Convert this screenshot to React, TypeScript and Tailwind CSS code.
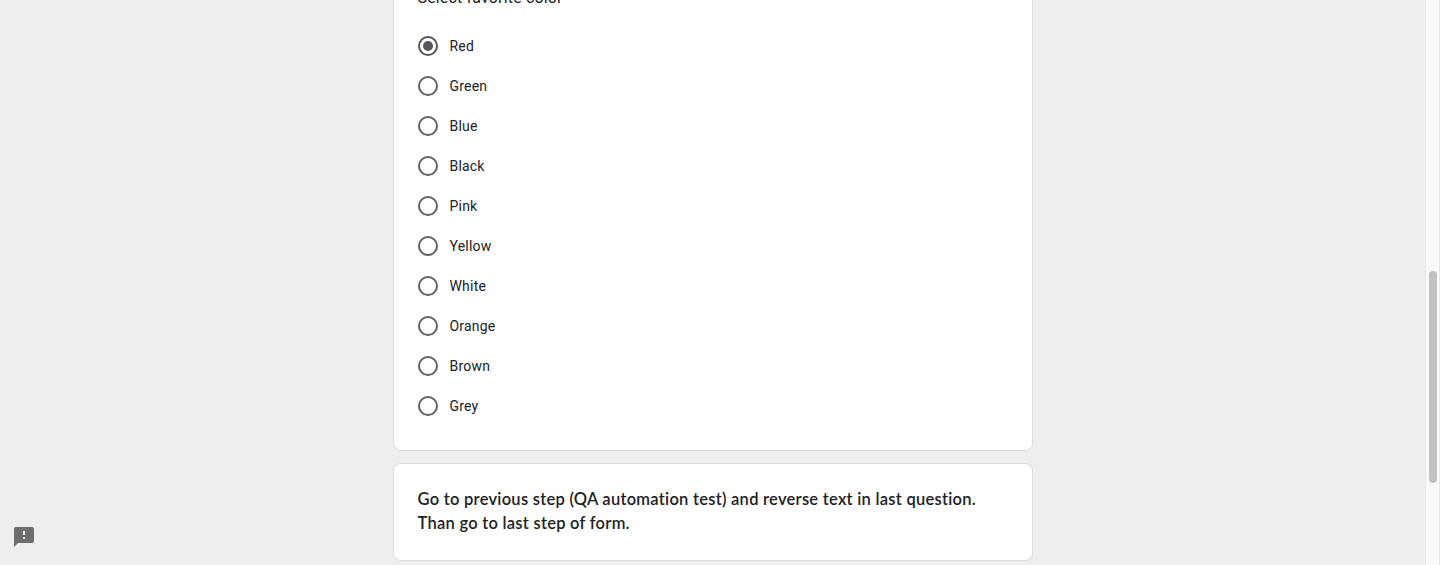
const colors = ["Red", "Green", "Blue", "Black", "Pink", "Yellow", "White", "Orange", "Brown", "Grey"];

function Radio({ checked }: { checked: boolean }) {
  return (
    <span
      className={
        checked
          ? "flex size-5 items-center justify-center rounded-full border-2 border-[#55565b]"
          : "flex size-5 items-center justify-center rounded-full border-2 border-[#5f6368]"
      }
    >
      {checked && <span className="size-2.5 rounded-full bg-[#55565b]" />}
    </span>
  );
}

export default function App() {
  return (
    <div className="flex h-[565px] w-full overflow-hidden bg-[#eeeeee] font-['Roboto',sans-serif] text-[#202124]">
      <aside className="flex w-[393px] shrink-0 items-end pb-4 pl-3">
        <svg width="24" height="24" viewBox="0 0 24 24" fill="#6e6e6e">
          <path d="M20 2H4c-1.1 0-1.99.9-1.99 2L2 22l4-4h14c1.1 0 2-.9 2-2V4c0-1.1-.9-2-2-2zm-7 12h-2v-2h2v2zm0-4h-2V6h2v4z" />
        </svg>
      </aside>
      <main className="flex w-[640px] shrink-0 flex-col gap-3">
        <section className="-mt-4 h-[467px] shrink-0 rounded-lg border border-[#dadce0] bg-white px-6 pl-[23.5px]">
          <h2 className="h-6 pt-px text-base leading-6 tracking-[0.16px]">Select favorite color</h2>
          <div className="mt-[17px] flex flex-col">
            {colors.map((color) => (
              <label key={color} className="flex h-10 items-center gap-3 text-sm tracking-[0.2px]">
                <Radio checked={color === "Red"} />
                <span>{color}</span>
              </label>
            ))}
          </div>
        </section>
        <section className="h-[98px] shrink-0 rounded-lg border border-[#dadce0] bg-white px-6 pt-[23px] pl-[23.5px] font-['Lato',sans-serif] text-[16.5px] font-semibold leading-6 tracking-[0.26px]">
          <p>Go to previous step (QA automation test) and reverse text in last question.</p>
          <p>Than go to last step of form.</p>
        </section>
      </main>
      <div className="ml-auto flex w-[15px] border-x border-[#e8e8e8] bg-[#fafafa] pl-[3px] pt-[271px]">
        <div className="h-[212px] w-2 rounded-full bg-[#c1c1c1]" />
      </div>
    </div>
  );
}
